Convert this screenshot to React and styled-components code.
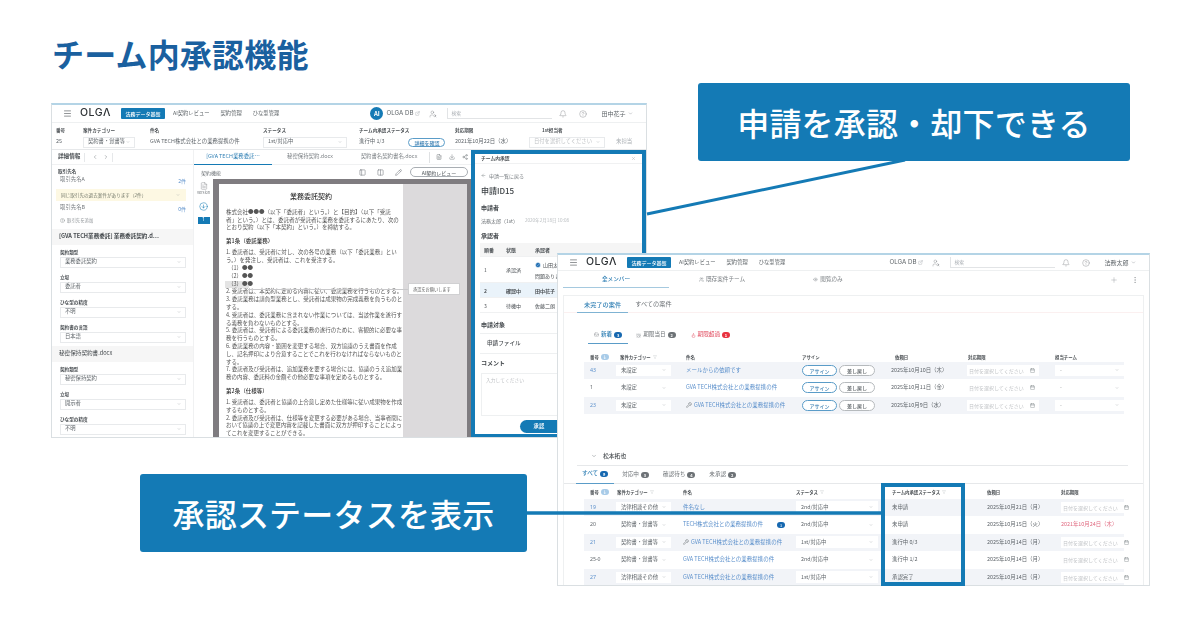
import React from "react";
import styled, { createGlobalStyle } from "styled-components";
import {
  Menu,
  Bell,
  CircleHelp,
  UserSearch,
  ExternalLink,
  ChevronDown,
  ChevronLeft,
  ChevronRight,
  Plus,
  EllipsisVertical,
  Calendar,
  Wrench,
  ArrowLeft,
  Pencil,
  FileText,
  Download,
  Share2,
  PanelLeft,
  Columns2,
  CircleArrowDown,
  CircleHelp as InfoIcon,
  Inbox,
  AlarmClock,
  Flame,
  Users,
  Eye,
  Filter,
  X,
  CircleCheck,
} from "lucide-react";

const BLUE = "#147ab5";
const LINK = "#5a8fcb";
const TEXT = "#5f656a";
const FAINT = "#a9aeb3";
const LINE = "#e6e8ea";

const GlobalStyle = createGlobalStyle`
  html, body {
    margin: 0;
    background: #ffffff;
  }
  * {
    box-sizing: border-box;
  }
  body {
    font-family: "Noto Sans CJK JP", "Noto Sans", sans-serif;
  }
`;

const Canvas = styled.div`
  position: relative;
  width: 1200px;
  height: 630px;
  overflow: hidden;
  background: #ffffff;
  padding: 33px 0 0 52px;
`;

const Title = styled.h1`
  margin: 0;
  font-size: 32px;
  line-height: 40px;
  font-weight: 700;
  letter-spacing: 0.2px;
  color: #1a609f;
`;

const Window = styled.section`
  position: absolute;
  left: ${(p) => p.$x}px;
  top: ${(p) => p.$y}px;
  width: ${(p) => p.$w}px;
  height: ${(p) => p.$h}px;
  background: #ffffff;
  border: 1px solid #dadfe2;
  border-top: 2px solid #b4d4e6;
  overflow: hidden;
  filter: blur(0.4px);
  font-size: 5.4px;
  line-height: 1;
  color: ${TEXT};
  white-space: nowrap;
`;

const Header = styled.header`
  display: flex;
  align-items: center;
  height: ${(p) => p.$h}px;
  padding-left: 11px;
  border-bottom: 1px solid #eef0f1;
`;

const Logo = styled.span`
  width: 41px;
  margin-left: 8px;
  font-family: "Inter", sans-serif;
  font-size: 10.5px;
  font-weight: 500;
  letter-spacing: 0.5px;
  color: #2c3134;
`;

const ActiveNav = styled.span`
  display: flex;
  align-items: center;
  justify-content: center;
  width: 44px;
  height: 11px;
  background: ${BLUE};
  color: #ffffff;
  border-radius: 1px;
  font-size: 5px;
  font-weight: 500;
`;

const NavItem = styled.span`
  margin-left: ${(p) => p.$gap}px;
  font-size: 5.3px;
  color: #5d6367;
`;

const RightTools = styled.div`
  display: flex;
  align-items: center;
  margin-left: auto;
  padding-right: 13px;
`;

const AiBadge = styled.span`
  display: flex;
  align-items: center;
  justify-content: center;
  width: 13px;
  height: 13px;
  margin-right: 3px;
  border-radius: 50%;
  background: ${BLUE};
  color: #ffffff;
  font-size: 6px;
  font-weight: 700;
`;

const DbName = styled.span`
  font-family: "Inter", sans-serif;
  font-size: 6.2px;
  color: #5d6367;
  margin-right: 2px;
`;

const SearchBox = styled.span`
  display: flex;
  align-items: center;
  width: 105px;
  height: 11px;
  margin: 0 7px 0 10px;
  padding-left: 3px;
  border-left: 1px solid #e2e4e6;
  border-bottom: 1px solid #e2e4e6;
  color: ${FAINT};
  font-size: 4.8px;
`;

const ToolGap = styled.span`
  width: ${(p) => p.$w}px;
`;

const UserName = styled.span`
  margin: 0 2.5px 0 14px;
  font-size: 6px;
  color: #5d6367;
`;

const AppHeader = ({ user, ai, h }) => (
  <Header $h={h}>
    <Menu size={9} strokeWidth={1.6} color="#4a4f53" />
    <Logo>OLGΛ</Logo>
    <ActiveNav>法務データ基盤</ActiveNav>
    <NavItem $gap={8}>AI契約レビュー</NavItem>
    <NavItem $gap={11}>契約管理</NavItem>
    <NavItem $gap={11}>ひな型管理</NavItem>
    <RightTools>
      {ai && <AiBadge>AI</AiBadge>}
      <DbName>OLGA DB</DbName>
      <ExternalLink size={5} color={FAINT} />
      <ToolGap $w={9} />
      <UserSearch size={8} strokeWidth={1.2} color="#7d8286" />
      <SearchBox>検索</SearchBox>
      <Bell size={8} strokeWidth={1.2} color="#7d8286" />
      <ToolGap $w={12} />
      <CircleHelp size={8} strokeWidth={1.2} color="#7d8286" />
      <UserName>{user}</UserName>
      <ChevronDown size={5} color="#8a8f93" />
    </RightTools>
  </Header>
);

const FieldGrid = styled.div`
  display: grid;
  grid-template-columns: 27px 67px 113px 96px 96px 74px 87px 1fr;
  grid-template-rows: 10px 14px;
  align-items: center;
  height: 27px;
  padding: 2px 0 0 4px;
  border-bottom: 1px solid ${LINE};
`;

const FieldLabel = styled.span`
  font-size: 4.6px;
  font-weight: 700;
  color: #4a4f53;
  padding-left: ${(p) => p.$pl || 0}px;
`;

const FieldValue = styled.span`
  font-size: 5.4px;
  color: ${(p) => p.$color || TEXT};
`;

const TeamStatus = styled.span`
  display: flex;
  align-items: center;
  gap: 24px;
`;

const SelectBox = styled.span`
  display: flex;
  align-items: center;
  justify-content: space-between;
  width: ${(p) => (p.$w ? `${p.$w}px` : "100%")};
  height: ${(p) => p.$h || 11}px;
  padding: 0 4px;
  background: #ffffff;
  border: 1px solid ${(p) => p.$line || "#e8eaec"};
  font-size: 5.3px;
  color: ${(p) => p.$color || TEXT};
`;

const Caret = () => <ChevronDown size={4} color="#9a9fa3" />;

const Select = ({ w, h, line, color, children }) => (
  <SelectBox $w={w} $h={h} $line={line} $color={color}>
    {children}
    <Caret />
  </SelectBox>
);

const PillButton = styled.span`
  display: inline-flex;
  align-items: center;
  justify-content: center;
  width: ${(p) => p.$w}px;
  height: ${(p) => p.$h || 10}px;
  border-radius: 6px;
  border: 1px solid ${(p) => p.$color || "#5a9cc8"};
  background: #ffffff;
  color: ${(p) => p.$text || "#3d80b3"};
  font-size: 5px;
  font-weight: 500;
`;

const Body = styled.div`
  display: flex;
  height: 287px;
`;

const Sidebar = styled.aside`
  flex: 0 0 142px;
  overflow: hidden;
  border-right: 1px solid #f0f1f2;
`;

const SideHead = styled.div`
  display: flex;
  align-items: center;
  height: 15px;
  padding-left: 6px;
  font-size: 5.6px;
  font-weight: 700;
  color: #4a4f53;
  border-bottom: 1px solid #f0f1f2;
`;

const Pager = styled.span`
  display: flex;
  align-items: center;
  gap: 5px;
  height: 9px;
  margin-left: 4px;
  padding: 0 3px 0 7px;
  border-left: 1px solid #e6e8ea;
  border-right: 1px solid #e6e8ea;
`;

const SideLabel = styled.div`
  margin: 2px 0 0 6px;
  height: 8px;
  font-size: 4.6px;
  font-weight: 700;
  line-height: 8px;
  color: #4a4f53;
`;

const PartnerRow = styled.div`
  display: flex;
  justify-content: space-between;
  align-items: center;
  height: 10px;
  margin-top: ${(p) => p.$mt || 0}px;
  padding: 0 7px 0 8px;
  font-size: 5.4px;
  color: #777c80;
  span:last-child {
    color: ${LINK};
    font-size: 5px;
  }
`;

const Notice = styled.div`
  display: flex;
  justify-content: space-between;
  align-items: center;
  height: 12px;
  margin: 4px 7px 0 4px;
  padding: 0 6px 0 5px;
  background: #fdf8e3;
  font-size: 4.6px;
  color: #73786a;
`;

const AddLink = styled.div`
  display: flex;
  align-items: center;
  gap: 2px;
  height: 8px;
  margin: 3px 0 0 8px;
  font-size: 4.4px;
  color: #8c9195;
`;

const SideSection = styled.div`
  display: flex;
  align-items: center;
  height: 16px;
  margin-top: ${(p) => p.$mt || 0}px;
  padding-left: 7px;
  background: #f6f6f6;
  font-size: 5.6px;
  font-weight: ${(p) => p.$weight || 700};
  color: #43484c;
`;

const Blocks = styled.div`
  display: flex;
  flex-direction: column;
  gap: 7px;
  padding: 4.5px 7px 3.5px 8px;
`;

const BlockLabel = styled.div`
  height: 5px;
  margin-bottom: 2px;
  font-size: 4.6px;
  font-weight: 700;
  line-height: 5px;
  color: #4a4f53;
`;

const Block = ({ label, value }) => (
  <div>
    <BlockLabel>{label}</BlockLabel>
    <Select>{value}</Select>
  </div>
);

const Center = styled.div`
  flex: 0 0 277px;
  display: flex;
  flex-direction: column;
`;

const DocTabs = styled.div`
  display: flex;
  align-items: center;
  height: 15px;
  flex: none;
  border-bottom: 1px solid #f0f1f2;
`;

const DocTab = styled.span`
  display: flex;
  align-items: center;
  justify-content: center;
  height: 15px;
  width: ${(p) => p.$w}px;
  margin-left: ${(p) => p.$ml || 0}px;
  font-size: 5.4px;
  color: ${(p) => (p.$active ? "#2f7fb4" : "#7d8286")};
  border-bottom: ${(p) => (p.$active ? `1.5px solid ${BLUE}` : "none")};
`;

const TabTools = styled.span`
  display: flex;
  align-items: center;
  gap: 7px;
  margin-left: 8px;
  padding-left: 6px;
  border-left: 1px solid #dfe1e3;
  height: 11px;
`;

const DocToolbar = styled.div`
  display: flex;
  align-items: center;
  height: 14px;
  flex: none;
  padding: 0 3px 0 7px;
  font-size: 5px;
  color: #6d7276;
`;

const ToolIcons = styled.span`
  display: flex;
  align-items: center;
  gap: 11px;
  margin: 0 8px 0 auto;
`;

const DocRow = styled.div`
  flex: 1;
  display: flex;
  min-height: 0;
`;

const VersionCol = styled.div`
  flex: 0 0 19px;
  display: flex;
  flex-direction: column;
  align-items: center;
  gap: 1px;
  padding-top: 3px;
  font-family: "Inter", sans-serif;
  font-size: 3.8px;
  color: #777c80;
  svg:nth-of-type(2) {
    margin-top: 6px;
  }
`;

const VersionNum = styled.span`
  display: flex;
  align-items: center;
  justify-content: center;
  width: 12px;
  height: 7px;
  margin-top: 5px;
  background: ${BLUE};
  color: #ffffff;
  font-size: 4.5px;
`;

const DocFrame = styled.div`
  position: relative;
  flex: 1;
  display: flex;
  background: #dcdadc;
  border-top: 5px solid #7f7c80;
  border-left: 6px solid #7f7c80;
  border-right: 4px solid #7f7c80;
`;

const Paper = styled.div`
  flex: 0 0 184px;
  height: 100%;
  padding: 9px 0 0 7px;
  overflow: hidden;
  background: #ffffff;
  font-size: 5.5px;
  line-height: 7.8px;
  color: #555555;
`;

const PaperTitle = styled.div`
  margin-left: -7px;
  margin-bottom: 8px;
  text-align: center;
  font-size: 7px;
  font-weight: 500;
  color: #333333;
`;

const PaperHead = styled.div`
  margin: 6.2px 0 3.2px;
  font-weight: 500;
  color: #333333;
`;

const PaperLine = styled.div`
  height: 7.8px;
  padding-left: ${(p) => p.$indent || 0}px;
`;

const Marked = styled.span`
  display: inline-block;
  width: 24px;
  margin-left: -3px;
  padding-left: 3px;
  background: #e4e4e4;
`;

const CommentLeader = styled.span`
  position: absolute;
  left: 29px;
  top: 104.5px;
  width: 166px;
  height: 1px;
  background: #c9c9cb;
`;

const CommentCard = styled.span`
  position: absolute;
  left: 189px;
  top: 99px;
  width: 52px;
  height: 12px;
  display: flex;
  align-items: center;
  padding-left: 4px;
  background: #ffffff;
  border: 1px solid #d0d0d2;
  font-size: 4.2px;
  color: #666666;
`;

const ApprovalPanel = styled.div`
  flex: 0 0 175px;
  height: 288px;
  padding-left: 6px;
  overflow: hidden;
  background: #ffffff;
  border: 4px solid ${BLUE};
  color: #4a4f53;
`;

const PanelHead = styled.div`
  display: flex;
  justify-content: space-between;
  align-items: center;
  height: 10px;
  margin-left: -6px;
  padding: 0 6px;
  font-size: 4.8px;
  font-weight: 700;
  border-bottom: 1px solid #f0f1f2;
`;

const BackLink = styled.div`
  display: flex;
  align-items: center;
  gap: 3px;
  height: 8px;
  margin-top: 7px;
  font-size: 5px;
  color: #7d8286;
`;

const PanelId = styled.div`
  height: 12px;
  margin-top: 6px;
  font-size: 8px;
  line-height: 12px;
  font-weight: 500;
  color: #3d4246;
`;

const PanelLabel = styled.div`
  height: 8px;
  margin-top: ${(p) => p.$mt}px;
  font-size: 6px;
  line-height: 8px;
  font-weight: 700;
  color: #43484c;
`;

const PanelMeta = styled.div`
  display: flex;
  gap: 7px;
  align-items: center;
  height: 8px;
  margin-top: 4px;
  font-size: 5px;
  color: #6d7276;
  span:last-child {
    color: #b9bdc0;
    font-size: 4.6px;
  }
`;

const ApproverTable = styled.div`
  margin: 3px 0 0 -1px;
`;

const ApproverRow = styled.div`
  display: grid;
  grid-template-columns: 22px 26px 1fr;
  align-items: center;
  height: ${(p) => p.$h}px;
  padding-left: 4px;
  background: ${(p) => p.$bg || "#ffffff"};
  font-size: 5px;
  font-weight: ${(p) => p.$weight || 400};
  border-bottom: 1px solid #f0f1f2;
`;

const ApproverName = styled.div`
  display: flex;
  flex-direction: column;
  gap: 5px;
  padding-left: 3px;
`;

const ApproverTop = styled.span`
  display: flex;
  align-items: center;
  gap: 2px;
`;

const FileRow = styled.div`
  display: flex;
  align-items: center;
  height: 21px;
  margin: 4px 0 0 -1px;
  padding-left: 7px;
  border-top: 1px solid #eef0f1;
  border-bottom: 1px solid #eef0f1;
  font-size: 5.6px;
  font-weight: 500;
`;

const CommentArea = styled.div`
  height: 43px;
  width: 160px;
  margin-top: 6px;
  padding: 4px;
  border: 1px solid #eef0f1;
  color: #c0c3c6;
  font-size: 4.8px;
`;

const ApproveButton = styled.span`
  display: flex;
  align-items: center;
  justify-content: center;
  width: 60px;
  height: 13px;
  margin: 4px 0 0 39px;
  padding-right: 22px;
  border-radius: 7px;
  background: ${BLUE};
  color: #ffffff;
  font-size: 5.4px;
  font-weight: 500;
`;

const MainTabs = styled.div`
  display: flex;
  align-items: center;
  height: 17px;
  padding: 0 0 0 5px;
`;

const MainTab = styled.span`
  display: flex;
  align-items: center;
  justify-content: center;
  gap: 2px;
  width: 106px;
  height: 17px;
  font-size: 5.6px;
  color: ${(p) => (p.$active ? "#2f7fb4" : "#7d8286")};
  font-weight: ${(p) => (p.$active ? 500 : 400)};
  padding-top: ${(p) => (p.$active ? 1.5 : 0)}px;
  border-bottom: ${(p) => (p.$active ? "1.5px solid #a5c9df" : "none")};
`;

const MainTools = styled.span`
  display: flex;
  align-items: center;
  gap: 13px;
  margin: 0 10px 0 auto;
`;

const Card = styled.div`
  margin: 7px 5px 0;
  border-top: 1px solid #eef0f1;
  border-left: 1px solid #eef0f1;
  border-right: 1px solid #eef0f1;
`;

const CardTabs = styled.div`
  display: flex;
  height: 17px;
  padding-left: 13px;
  border-bottom: 1px solid #fbf0f0;
`;

const CardTab = styled.span`
  display: flex;
  align-items: center;
  height: 17px;
  padding: ${(p) => (p.$active ? "1.5px 7px 0" : "0 7px")};
  font-size: 6.2px;
  font-weight: ${(p) => (p.$active ? 500 : 400)};
  color: ${(p) => (p.$active ? "#2f7fb4" : "#6d7276")};
  border-bottom: ${(p) => (p.$active ? "1.5px solid #7fb3d3" : "none")};
`;

const StatusTabs = styled.div`
  display: flex;
  height: 18px;
  padding-left: ${(p) => p.$pl}px;
  margin-top: ${(p) => p.$mt || 0}px;
  border-bottom: 1px solid ${(p) => p.$line || "transparent"};
`;

const StatusTab = styled.span`
  display: flex;
  align-items: center;
  gap: 2px;
  height: 18px;
  padding: 0 6px;
  margin-right: ${(p) => p.$mr || 0}px;
  font-size: 5.6px;
  font-weight: ${(p) => (p.$active ? 500 : 400)};
  color: ${(p) => p.$color || "#6d7276"};
  border-bottom: ${(p) => (p.$active ? "1.5px solid #5a9cc8" : "none")};
`;

const Count = styled.span`
  display: inline-flex;
  align-items: center;
  justify-content: center;
  width: 8px;
  height: 6px;
  border-radius: 3px;
  background: ${(p) => p.$bg || "#6d7276"};
  color: #ffffff;
  font-size: 4px;
  font-weight: 700;
`;

const TableGrid = styled.div`
  display: grid;
  grid-template-columns: ${(p) => p.$cols};
  align-items: center;
  width: 540px;
  margin: ${(p) => p.$mt || 0}px 0 0 20px;
  height: ${(p) => p.$h}px;
  padding-top: ${(p) => p.$pt || 0}px;
  background: ${(p) => (p.$striped ? "#f2f4f8" : "transparent")};
`;

const ColHead = styled.span`
  display: flex;
  align-items: center;
  gap: 2px;
  font-size: 4.4px;
  font-weight: 700;
  color: #4a4f53;
  padding-left: ${(p) => p.$pl || 0}px;
`;

const NumCell = styled.span`
  padding-left: 6px;
  font-family: "Noto Sans", sans-serif;
  font-size: 5.2px;
  color: ${(p) => (p.$plain ? TEXT : LINK)};
`;

const LinkCell = styled.span`
  display: flex;
  align-items: center;
  gap: 2px;
  font-size: 5.5px;
  color: ${LINK};
`;

const MentionDot = styled.span`
  display: inline-flex;
  align-items: center;
  justify-content: center;
  width: 8px;
  height: 6px;
  margin-left: 12px;
  border-radius: 3px;
  background: #1668b0;
  color: #ffffff;
  font-size: 4px;
`;

const Actions = styled.span`
  display: flex;
  gap: 2px;
`;

const DateCell = styled.span`
  font-size: 5.4px;
  color: ${(p) => p.$color || TEXT};
`;

const DueInput = styled.span`
  display: flex;
  align-items: center;
  justify-content: space-between;
  width: 72px;
  height: 11px;
  padding: 0 4px 0 2px;
  background: #ffffff;
  font-size: 5px;
  color: #c0c3c6;
`;

const SectionTitle = styled.div`
  display: flex;
  align-items: center;
  gap: 6px;
  height: 18px;
  margin: 33.5px 15px 0 13px;
  padding-left: 14px;
  font-size: 5.8px;
  font-weight: 500;
  color: #43484c;
  border-bottom: 1px solid ${LINE};
`;

const Overlays = styled.svg`
  position: absolute;
  left: 0;
  top: 0;
  width: 1200px;
  height: 630px;
  pointer-events: none;
`;

const Highlight = styled.div`
  position: absolute;
  left: 881px;
  top: 483px;
  width: 84px;
  height: 103px;
  border: 4px solid ${BLUE};
`;

const Callout = styled.div`
  position: absolute;
  left: ${(p) => p.$x}px;
  top: ${(p) => p.$y}px;
  display: flex;
  align-items: center;
  justify-content: center;
  width: ${(p) => p.$w}px;
  height: 78px;
  background: ${BLUE};
  border-radius: 3px;
  color: #ffffff;
  font-size: 32px;
  font-weight: 500;
  letter-spacing: 0.2px;
`;

const paper = [
  { t: "title", s: "業務委託契約" },
  { s: "株式会社●●●（以下「委託者」という。）と【目的】（以下「受託" },
  { s: "者」という。）とは、委託者が受託者に業務を委託するにあたり、次の" },
  { s: "とおり契約（以下「本契約」という。）を締結する。" },
  { t: "head", s: "第1条（委託業務）" },
  { s: "1. 委託者は、受託者に対し、次の各号の業務（以下「委託業務」とい" },
  { s: "う。）を発注し、受託者は、これを受注する。" },
  { s: "（1）●●", indent: 2 },
  { s: "（2）●●", indent: 2 },
  { t: "mark", s: "（3）●●", indent: 2 },
  { s: "2. 受託者は、本契約に定める内容に従い、委託業務を行うものとする。" },
  { s: "3. 委託業務は請負型業務とし、受託者は成果物の完成義務を負うものと" },
  { s: "する。" },
  { s: "4. 受託者は、委託業務に含まれない作業については、当該作業を遂行す" },
  { s: "る義務を負わないものとする。" },
  { s: "5. 委託者は、受託者による委託業務の遂行のために、客観的に必要な事" },
  { s: "務を行うものとする。" },
  { s: "6. 委託業務の内容・範囲を変更する場合、双方協議のうえ書面を作成" },
  { s: "し、記名押印により合意することでこれを行わなければならないものと" },
  { s: "する。" },
  { s: "7. 委託者及び受託者は、追加業務を要する場合には、協議のうえ追加業" },
  { s: "務の内容、委託料の金額その他必要な事項を定めるものとする。" },
  { t: "head", s: "第2条（仕様等）" },
  { s: "1. 受託者は、委託者と協議の上合意し定めた仕様等に従い成果物を作成" },
  { s: "するものとする。" },
  { s: "2. 委託者及び受託者は、仕様等を変更する必要がある場合、当事者間に" },
  { s: "おいて協議の上で変更内容を記載した書面に双方が押印することによっ" },
  { s: "てこれを変更することができる。" },
];

const NEW_COLS = "32px 70px 116px 89px 76px 88px 69px";
const MINE_COLS = "32px 67px 113px 96px 95px 74px 63px";

const newRows = [
  { id: "43", name: "メールからの依頼です", date: "2025年10月10日（木）" },
  { id: "1", plain: true, name: "GVA TECH株式会社との業務提携の件", date: "2025年10月11日（金）" },
  { id: "23", tool: true, name: "GVA TECH株式会社との業務提携の件", date: "2025年10月9日（水）" },
];

const mineRows = [
  { id: "19", cat: "法律相談その他", name: "件名なし", status: "2nd/対応中", team: "未申請", date: "2025年10月21日（月）" },
  { id: "20", cat: "契約書・覚書等", name: "TECH株式会社との業務提携の件", count: 3, status: "2nd/対応中", team: "未申請", date: "2025年10月15日（火）", due: "2021年10月24日（木）" },
  { id: "21", cat: "契約書・覚書等", tool: true, name: "GVA TECH株式会社との業務提携の件", status: "1st/対応中", team: "進行中 0/3", date: "2025年10月14日（月）" },
  { id: "25-0", cat: "契約書・覚書等", name: "GVA TECH株式会社との業務提携の件", status: "2nd/対応中", team: "進行中 1/2", date: "2025年10月14日（月）" },
  { id: "27", cat: "法律相談その他", name: "GVA TECH株式会社との業務提携の件", status: "1st/対応中", team: "承認完了", date: "2025年10月14日（月）" },
];

const Due = () => (
  <DueInput>
    日付を選択してください
    <Calendar size={5} color="#7d8286" />
  </DueInput>
);

const ContractWindow = () => (
  <Window $x={51} $y={103} $w={596} $h={335}>
    <AppHeader user="田中花子" ai h={18} />
    <FieldGrid>
      <FieldLabel>番号</FieldLabel>
      <FieldLabel>案件カテゴリー</FieldLabel>
      <FieldLabel>件名</FieldLabel>
      <FieldLabel>ステータス</FieldLabel>
      <FieldLabel>チーム内承認ステータス</FieldLabel>
      <FieldLabel>対応期限</FieldLabel>
      <FieldLabel $pl={13}>1st担当者</FieldLabel>
      <span />
      <FieldValue>25</FieldValue>
      <Select w={52}>契約書・覚書等</Select>
      <FieldValue>GVA TECH株式会社との業務提携の件</FieldValue>
      <Select w={84}>1st/対応中</Select>
      <TeamStatus>
        <FieldValue>進行中 1/3</FieldValue>
        <PillButton $w={37} $h={9}>詳細を確認</PillButton>
      </TeamStatus>
      <FieldValue>2021年10月22日（水）</FieldValue>
      <Select w={76} color="#c0c3c6">日付を選択してください</Select>
      <FieldValue $color={FAINT}>未担当</FieldValue>
    </FieldGrid>
    <Body>
      <Sidebar>
        <SideHead>
          詳細情報
          <Pager>
            <ChevronLeft size={6} color="#7d8286" />
            <ChevronRight size={6} color="#7d8286" />
          </Pager>
        </SideHead>
        <SideLabel>取引先名</SideLabel>
        <PartnerRow>
          <span>取引先名A</span>
          <span>2件</span>
        </PartnerRow>
        <Notice>
          同じ取引先の過去案件があります（2件）
          <Caret />
        </Notice>
        <PartnerRow $mt={2}>
          <span>取引先名B</span>
          <span>0件</span>
        </PartnerRow>
        <AddLink>
          <InfoIcon size={5} color="#8c9195" />
          取引先を追加
        </AddLink>
        <SideSection $mt={5}>[GVA TECH業務委託] 業務委託契約.d⋯</SideSection>
        <Blocks>
          <Block label="契約類型" value="業務委託契約" />
          <Block label="立場" value="委託者" />
          <Block label="ひな型の精度" value="不明" />
          <Block label="契約書の言語" value="日本語" />
        </Blocks>
        <SideSection $weight={400}>秘密保持契約書.docx</SideSection>
        <Blocks>
          <Block label="契約類型" value="秘密保持契約" />
          <Block label="立場" value="開示者" />
          <Block label="ひな型の精度" value="不明" />
        </Blocks>
      </Sidebar>
      <Center>
        <DocTabs>
          <DocTab $w={78} $active>[GVA TECH業務委託⋯</DocTab>
          <DocTab $w={64} $ml={6}>秘密保持契約.docx</DocTab>
          <DocTab $w={64} $ml={15}>契約書名契約書名.docx</DocTab>
          <TabTools>
            <FileText size={6} color="#7d8286" />
            <Download size={6} color="#7d8286" />
            <Share2 size={6} color="#7d8286" />
          </TabTools>
        </DocTabs>
        <DocToolbar>
          契約機能
          <ToolIcons>
            <PanelLeft size={7} color="#7d8286" />
            <Columns2 size={7} color="#7d8286" />
            <Pencil size={7} color="#7d8286" />
          </ToolIcons>
          <PillButton $w={58} $h={10} $color="#a9aeb3" $text="#6d7276">
            AI契約レビュー
          </PillButton>
        </DocToolbar>
        <DocRow>
          <VersionCol>
            <FileText size={8} strokeWidth={1.2} color="#7d8286" />
            version
            <CircleArrowDown size={9} strokeWidth={1.4} color={BLUE} />
            <VersionNum>1</VersionNum>
          </VersionCol>
          <DocFrame>
            <Paper>
              {paper.map((line, i) => {
                if (line.t === "title") return <PaperTitle key={i}>{line.s}</PaperTitle>;
                if (line.t === "head") return <PaperHead key={i}>{line.s}</PaperHead>;
                if (line.t === "mark") {
                  return (
                    <PaperLine key={i} $indent={line.indent}>
                      <Marked>{line.s}</Marked>
                    </PaperLine>
                  );
                }
                return (
                  <PaperLine key={i} $indent={line.indent}>
                    {line.s}
                  </PaperLine>
                );
              })}
            </Paper>
            <CommentLeader />
            <CommentCard>承認をお願いします</CommentCard>
          </DocFrame>
        </DocRow>
      </Center>
      <ApprovalPanel>
        <PanelHead>
          チーム内承認
          <X size={5} color="#a9aeb3" />
        </PanelHead>
        <BackLink>
          <ArrowLeft size={5} color="#7d8286" />
          申請一覧に戻る
        </BackLink>
        <PanelId>申請ID15</PanelId>
        <PanelLabel $mt={7}>申請者</PanelLabel>
        <PanelMeta>
          <span>法務太郎（1st）</span>
          <span>2020年2月18日 10:08</span>
        </PanelMeta>
        <PanelLabel $mt={8}>承認者</PanelLabel>
        <ApproverTable>
          <ApproverRow $h={14} $bg="#f5f5f5" $weight={700}>
            <span>順番</span>
            <span>状態</span>
            <ApproverName>承認者</ApproverName>
          </ApproverRow>
          <ApproverRow $h={26}>
            <span>1</span>
            <span>承認済</span>
            <ApproverName>
              <ApproverTop>
                <CircleCheck size={6} color="#ffffff" fill="#1668b0" />
                山田太郎
              </ApproverTop>
              <span>問題ありません</span>
            </ApproverName>
          </ApproverRow>
          <ApproverRow $h={15} $bg="#eaf3fa" $weight={700}>
            <span>2</span>
            <span>確認中</span>
            <ApproverName>田中花子</ApproverName>
          </ApproverRow>
          <ApproverRow $h={15}>
            <span>3</span>
            <span>待機中</span>
            <ApproverName>佐藤二朗</ApproverName>
          </ApproverRow>
        </ApproverTable>
        <PanelLabel $mt={8}>申請対象</PanelLabel>
        <FileRow>申請ファイル</FileRow>
        <PanelLabel $mt={5}>コメント</PanelLabel>
        <CommentArea>入力してください</CommentArea>
        <ApproveButton>承認</ApproveButton>
      </ApprovalPanel>
    </Body>
  </Window>
);

const TeamWindow = () => (
  <Window $x={557} $y={253} $w={593} $h={333}>
    <AppHeader user="法務太郎" h={16} />
    <MainTabs>
      <MainTab $active>全メンバー</MainTab>
      <MainTab>
        <Users size={5} color="#8a8f93" />
        既存案件チーム
      </MainTab>
      <MainTab>
        <Eye size={5} color="#8a8f93" />
        閲覧のみ
      </MainTab>
      <MainTools>
        <Plus size={8} strokeWidth={1.2} color="#8a8f93" />
        <EllipsisVertical size={8} strokeWidth={1.4} color="#8a8f93" />
      </MainTools>
    </MainTabs>
    <Card>
      <CardTabs>
        <CardTab $active>未完了の案件</CardTab>
        <CardTab>すべての案件</CardTab>
      </CardTabs>
      <StatusTabs $pl={24} $mt={13}>
        <StatusTab $active $color="#2f7fb4" $mr={2}>
          <Inbox size={5} color="#8a8f93" />
          新着
          <Count $bg="#1668b0">3</Count>
        </StatusTab>
        <StatusTab $mr={3}>
          <AlarmClock size={5} color="#8a8f93" />
          期限当日
          <Count>2</Count>
        </StatusTab>
        <StatusTab $color="#e0475b">
          <Flame size={5} color="#e0475b" />
          期限超過
          <Count $bg="#e8323f">1</Count>
        </StatusTab>
      </StatusTabs>
      <TableGrid $cols={NEW_COLS} $h={9.5} $mt={8}>
        <ColHead $pl={6}>
          番号
          <Count $bg="#a8cbe8">↓</Count>
        </ColHead>
        <ColHead $pl={4}>
          案件カテゴリー
          <Filter size={4} color="#c0c3c6" />
        </ColHead>
        <ColHead>件名</ColHead>
        <ColHead>アサイン</ColHead>
        <ColHead $pl={4}>依頼日</ColHead>
        <ColHead $pl={1}>対応期限</ColHead>
        <ColHead>担当チーム</ColHead>
      </TableGrid>
      {newRows.map((row, i) => (
        <TableGrid key={row.id} $cols={NEW_COLS} $h={17.5} $striped={i !== 1}>
          <NumCell $plain={row.plain}>{row.id}</NumCell>
          <Select w={55} h={11} line="#ffffff">未設定</Select>
          <LinkCell>
            {row.tool && <Wrench size={6} color="#6d7276" />}
            {row.name}
          </LinkCell>
          <Actions>
            <PillButton $w={35} $h={11}>アサイン</PillButton>
            <PillButton $w={36} $h={11} $color="#b6babd" $text="#5d6367">差し戻し</PillButton>
          </Actions>
          <DateCell>{row.date}</DateCell>
          <Due />
          <Select w={69} h={11} line="#ffffff">-</Select>
        </TableGrid>
      ))}
      <SectionTitle>
        <ChevronDown size={6} color="#7d8286" />
        松本拓也
      </SectionTitle>
      <StatusTabs $pl={12} $line={LINE}>
        <StatusTab $active $color="#2f7fb4" $mr={2}>
          すべて
          <Count $bg="#1668b0">9</Count>
        </StatusTab>
        <StatusTab $mr={2}>
          対応中
          <Count>3</Count>
        </StatusTab>
        <StatusTab $mr={2}>
          確認待ち
          <Count>4</Count>
        </StatusTab>
        <StatusTab>
          未承認
          <Count>2</Count>
        </StatusTab>
      </StatusTabs>
      <TableGrid $cols={MINE_COLS} $h={15} $pt={2}>
        <ColHead $pl={6}>
          番号
          <Count $bg="#a8cbe8">↓</Count>
        </ColHead>
        <ColHead $pl={1}>
          案件カテゴリー
          <Filter size={4} color="#c0c3c6" />
        </ColHead>
        <ColHead>件名</ColHead>
        <ColHead>
          ステータス
          <Filter size={4} color="#c0c3c6" />
        </ColHead>
        <ColHead>
          チーム内承認ステータス
          <Filter size={4} color="#c0c3c6" />
        </ColHead>
        <ColHead>依頼日</ColHead>
        <ColHead>対応期限</ColHead>
      </TableGrid>
      {mineRows.map((row, i) => (
        <TableGrid key={row.id} $cols={MINE_COLS} $h={17.5} $striped={i % 2 === 0}>
          <NumCell $plain={i === 1 || i === 3}>{row.id}</NumCell>
          <Select w={55} h={11} line="#ffffff">{row.cat}</Select>
          <LinkCell>
            {row.tool && <Wrench size={6} color="#6d7276" />}
            {row.name}
            {row.count && <MentionDot>{row.count}</MentionDot>}
          </LinkCell>
          <Select w={82} h={12} line="#ffffff">{row.status}</Select>
          <DateCell>{row.team}</DateCell>
          <DateCell>{row.date}</DateCell>
          {row.due ? <DateCell $color="#e06a80">{row.due}</DateCell> : <Due />}
        </TableGrid>
      ))}
    </Card>
  </Window>
);

export default function App() {
  return (
    <>
      <GlobalStyle />
      <Canvas>
        <Title>チーム内承認機能</Title>
        <ContractWindow />
        <TeamWindow />
        <Overlays viewBox="0 0 1200 630">
          <line x1="647" y1="214" x2="905" y2="160" stroke={BLUE} strokeWidth="3" />
          <line x1="527" y1="513" x2="884" y2="513" stroke={BLUE} strokeWidth="3.5" />
        </Overlays>
        <Highlight />
        <Callout $x={698} $y={83} $w={432}>申請を承認・却下できる</Callout>
        <Callout $x={140} $y={474} $w={387}>承認ステータスを表示</Callout>
      </Canvas>
    </>
  );
}
